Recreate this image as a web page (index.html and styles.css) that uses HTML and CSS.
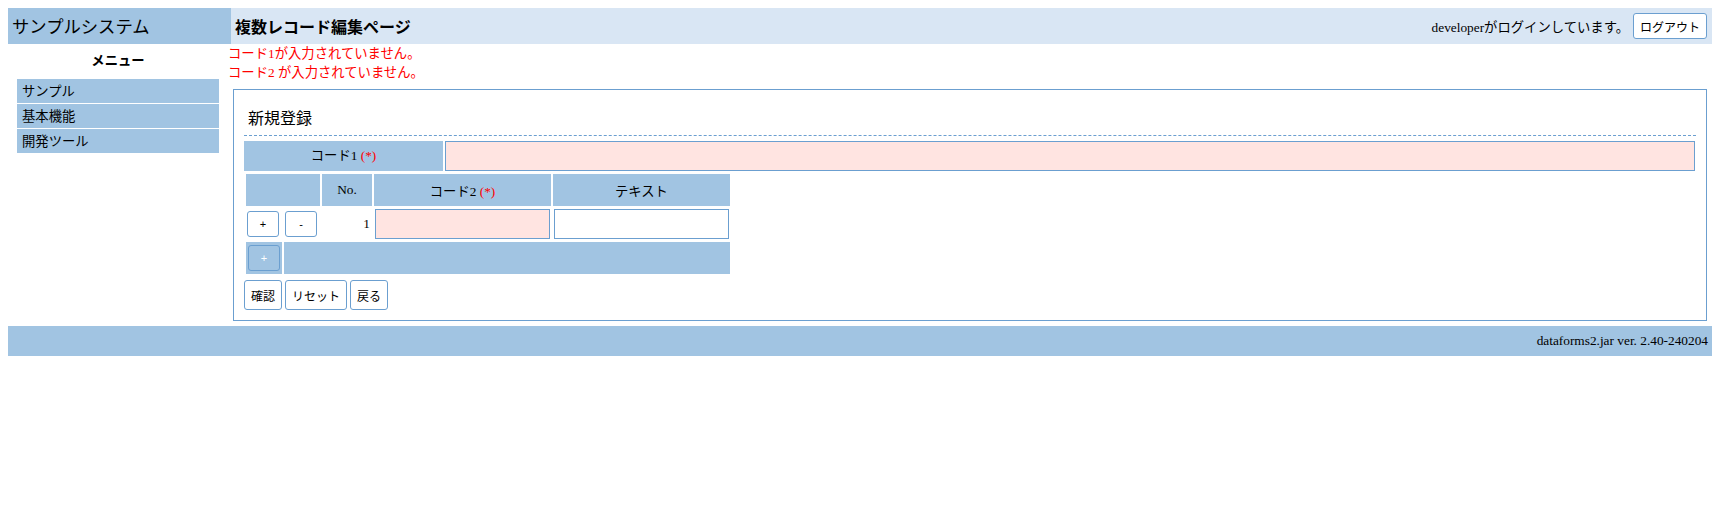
FILE: index.html
```html
<!DOCTYPE html>
<html lang="ja">
<head>
<meta charset="utf-8">
<title>複数レコード編集ページ</title>
<link rel="stylesheet" href="styles.css">
</head>
<body>
<div class="page">
  <header class="header">
    <div class="sys-name">サンプルシステム</div>
    <div class="header-main">
      <h1 class="page-title">複数レコード編集ページ</h1>
      <div class="login-info">
        <span class="login-text">developerがログインしています。</span>
        <button class="btn btn-logout" type="button">ログアウト</button>
      </div>
    </div>
  </header>
  <div class="content">
    <nav class="side">
      <div class="menu-title">メニュー</div>
      <ul class="menu">
        <li class="menu-item">サンプル</li>
        <li class="menu-item">基本機能</li>
        <li class="menu-item">開発ツール</li>
      </ul>
    </nav>
    <main class="main">
      <div class="errors">
        <div class="error-line">コード1が入力されていません。</div>
        <div class="error-line">コード2 が入力されていません。</div>
      </div>
      <section class="form-box">
        <h2 class="form-title">新規登録</h2>
        <div class="field-row">
          <div class="field-label">コード1 <span class="req">(*)</span></div>
          <input class="field-input err" type="text">
        </div>
        <table class="list">
          <colgroup>
            <col class="col-a">
            <col class="col-b">
            <col class="col-no">
            <col class="col-code">
            <col class="col-text">
          </colgroup>
          <thead>
            <tr>
              <th colspan="2"></th>
              <th>No.</th>
              <th>コード2 <span class="req">(*)</span></th>
              <th>テキスト</th>
            </tr>
          </thead>
          <tbody>
            <tr>
              <td class="btn-cell"><button class="mini" type="button">+</button></td>
              <td class="btn-cell"><button class="mini" type="button">-</button></td>
              <td class="no-cell">1</td>
              <td class="in-cell"><input class="cell-input err" type="text"></td>
              <td class="in-cell"><input class="cell-input" type="text"></td>
            </tr>
          </tbody>
          <tfoot>
            <tr>
              <td class="add-cell"><button class="mini mini-add" type="button">+</button></td>
              <td class="foot-cell" colspan="4"></td>
            </tr>
          </tfoot>
        </table>
        <div class="actions">
          <button class="btn btn-act" type="button">確認</button>
          <button class="btn btn-act" type="button">リセット</button>
          <button class="btn btn-act" type="button">戻る</button>
        </div>
      </section>
    </main>
  </div>
  <footer class="footer">dataforms2.jar ver. 2.40-240204</footer>
</div>
</body>
</html>
```

FILE: styles.css
```css
html, body {
  background: #ffffff;
}

body {
  margin: 8px;
  font-family: "Liberation Serif", "Noto Sans CJK JP", serif;
  font-size: 13.33px;
  color: #000000;
}

.page {
  display: flex;
  flex-direction: column;
}

/* header */
.header {
  display: flex;
  height: 36px;
}

.sys-name {
  width: 223px;
  flex: none;
  box-sizing: border-box;
  padding-left: 4px;
  background: #a1c4e2;
  font-family: "Noto Sans CJK JP", sans-serif;
  font-size: 17.33px;
  line-height: 36px;
  white-space: nowrap;
}

.header-main {
  flex: 1;
  display: flex;
  align-items: center;
  justify-content: space-between;
  background: #d9e6f4;
  padding: 0 5px 0 4px;
}

.page-title {
  margin: 0;
  font-family: "Noto Sans CJK JP", sans-serif;
  font-size: 16px;
  font-weight: bold;
  line-height: 36px;
}

.login-info {
  display: flex;
  align-items: center;
  gap: 4px;
}

.btn {
  box-sizing: border-box;
  background: #ffffff;
  border: 1px solid #6b9fd0;
  border-radius: 3px;
  padding: 0 6px;
  font-family: "Noto Sans CJK JP", sans-serif;
  font-size: 12px;
  color: #000000;
  cursor: pointer;
}

.btn-logout {
  height: 26px;
}

.btn-act {
  height: 30px;
}

/* body */
.content {
  display: flex;
  align-items: flex-start;
}

.side {
  width: 220px;
  flex: none;
}

.menu-title {
  text-align: center;
  font-weight: bold;
  font-family: "Noto Sans CJK JP", sans-serif;
  line-height: 20px;
  padding-top: 6px;
  margin-bottom: 9px;
}

.menu {
  list-style: none;
  margin: 0 9px;
  padding: 0;
}

.menu-item {
  height: 24px;
  line-height: 24px;
  padding-left: 5px;
  margin-bottom: 1px;
  background: #a1c4e2;
  font-family: "Noto Sans CJK JP", sans-serif;
}

.main {
  flex: 1;
  min-width: 0;
}

.errors {
  color: #ff0000;
  line-height: 19px;
}

.form-box {
  margin: 7px 5px 0 5px;
  border: 1px solid #6b9fd0;
  padding: 10px 10px 10px 10px;
}

.form-title {
  margin: 0;
  height: 35px;
  line-height: 35px;
  padding-left: 4px;
  font-family: "Noto Sans CJK JP", sans-serif;
  font-size: 16px;
  font-weight: normal;
  border-bottom: 1px dashed #6b9fd0;
}

.field-row {
  display: grid;
  grid-template-columns: 199px 1fr;
  column-gap: 2px;
  height: 30px;
  margin: 5px 1px 0 0;
}

.field-label {
  background: #a1c4e2;
  text-align: center;
  line-height: 30px;
}

.req {
  color: #ff0000;
}

.field-input,
.cell-input {
  box-sizing: border-box;
  height: 30px;
  width: 100%;
  margin: 0;
  border: 1px solid #6b9fd0;
  background: #ffffff;
  padding: 0 4px;
  font: inherit;
}

.err {
  background: #ffe4e1;
}

/* table */
.list {
  table-layout: fixed;
  width: 488px;
  border-spacing: 2px;
  margin-top: 1px;
}

.col-a { width: 36px; }
.col-b { width: 36px; }
.col-no { width: 50px; }
.col-code { width: 177px; }
.col-text { width: 177px; }

.list th {
  height: 32px;
  padding: 0;
  background: #a1c4e2;
  font-weight: normal;
  text-align: center;
}

.list td {
  padding: 1px;
  height: 30px;
}

.btn-cell {
  text-align: left;
  vertical-align: middle;
}

.no-cell {
  text-align: right;
  padding-right: 2px !important;
}

.mini {
  box-sizing: border-box;
  display: block;
  width: 32px;
  height: 26px;
  padding: 0;
  background: #ffffff;
  border: 1px solid #6b9fd0;
  border-radius: 3px;
  font-family: "Liberation Sans", sans-serif;
  font-size: 11px;
  color: #000000;
}

.add-cell {
  background: #a1c4e2;
  padding: 2px !important;
  height: 28px !important;
}

.mini-add {
  background: #a1c4e2;
  color: #ffffff;
}

.foot-cell {
  background: #a1c4e2;
}

.actions {
  display: flex;
  gap: 3px;
  margin-top: 4px;
}

/* footer */
.footer {
  margin-top: 5px;
  height: 30px;
  line-height: 30px;
  padding-right: 4px;
  text-align: right;
  background: #a1c4e2;
}
```
